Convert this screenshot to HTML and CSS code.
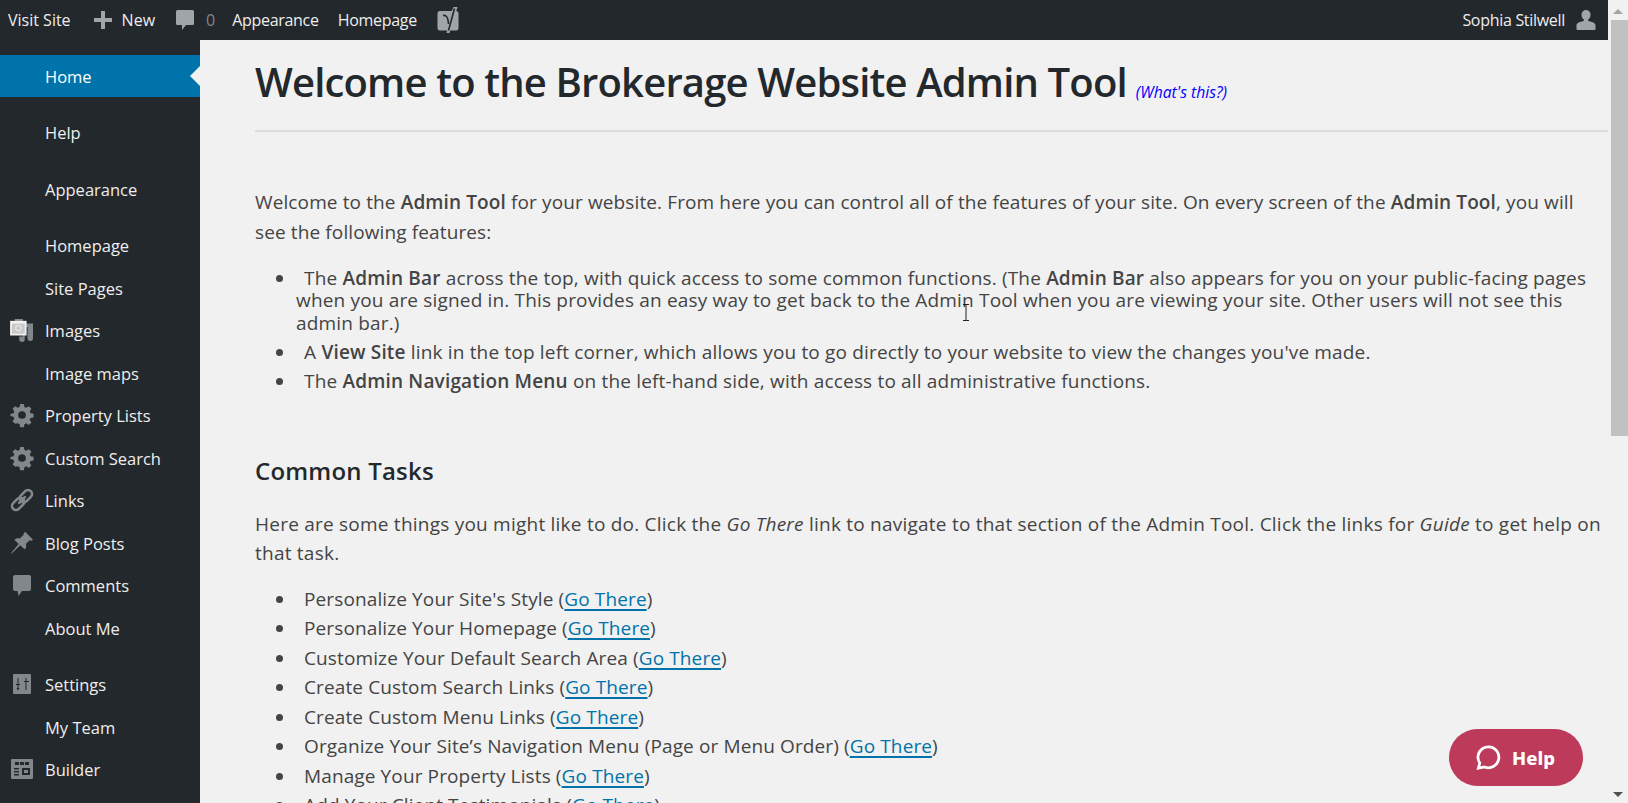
FILE: index.html
```html
<!DOCTYPE html>
<html lang="en">
<head>
<meta charset="utf-8">
<title>Admin Tool</title>
<link rel="stylesheet" href="styles.css">
</head>
<body>
<header class="topbar">
  <a class="tb-item tb-first">Visit Site</a>
  <a class="tb-item tb-new"><svg class="tb-ic plus" viewBox="0 0 20 20"><path d="M8 1h4v7h7v4h-7v7H8v-7H1V8h7z"/></svg>New</a>
  <a class="tb-item tb-comments"><svg class="tb-ic" viewBox="0 0 20 20"><path d="M2.500 0h15A1.500 1.500 0 0 1 19 1.500v12a1.500 1.500 0 0 1-1.500 1.500H11l-4 5v-5H2.500A1.500 1.500 0 0 1 1 13.500v-12A1.500 1.500 0 0 1 2.500 0z"/></svg><span class="dim">0</span></a>
  <a class="tb-item tight">Appearance</a>
  <a class="tb-item tb-home tight">Homepage</a>
  <a class="tb-item"><svg class="tb-yoast" viewBox="0 0 22 26"><path d="M3 4h16a2.500 2.500 0 0 1 2.500 2.500V21a2.500 2.500 0 0 1-2.500 2.500H3A2.500 2.500 0 0 1 .5 21V6.500A2.500 2.500 0 0 1 3 4z"/><path d="M15 3.500L16.500 0h4L12.500 26H9.500z"/><path class="y" d="M6 8.500c2.500-.5 4.500 1 5 4.500l.5 4M17.500 1.500l-6 22"/></svg></a>
  <span class="tb-spacer"></span>
  <a class="tb-item tb-user tight">Sophia Stilwell<svg class="tb-ic user" viewBox="0 0 20 20"><path d="M10 0a4.500 4.500 0 0 1 4.500 4.900c0 2-1 3.600-2.300 4.400v1.600c2.800.6 7.300 1.600 7.300 4.300V19a1 1 0 0 1-1 1H1.500a1 1 0 0 1-1-1v-3.800c0-2.700 4.500-3.700 7.300-4.300V9.300C6.500 8.500 5.500 6.900 5.500 4.900A4.500 4.500 0 0 1 10 0z"/></svg></a>
</header>
<div class="shell">
  <nav class="sidebar">
    <a class="nav-item current">Home</a>
    <a class="nav-item sep">Help</a>
    <a class="nav-item sep">Appearance</a>
    <a class="nav-item sep">Homepage</a>
    <a class="nav-item">Site Pages</a>
    <a class="nav-item"><span class="nav-ic"><svg viewBox="0 0 24 24"><path d="M4 0h9v3H4zM13 5h11v16a3 3 0 0 1-6 0V9h-3v13a3 3 0 0 1-6 0v-3h4z"/><path class="w" d="M-1 2h18v16H-1z"/><path class="c" d="M1 5h14v11H1z"/><circle class="o" cx="8" cy="10" r="3"/></svg></span>Images</a>
    <a class="nav-item">Image maps</a>
    <a class="nav-item"><span class="nav-ic"><svg viewBox="0 0 20 20"><path fill-rule="evenodd" d="M8.300 0h3.400l.5 2.800 1.700.7L16.200 2l2.400 2.400-1.600 2.300.7 1.700 2.800.5v3.400l-2.800.5-.7 1.700 1.600 2.300-2.400 2.400-2.300-1.600-1.700.7-.5 2.800H8.300l-.5-2.800-1.700-.7L3.800 18l-2.400-2.400 1.600-2.300-.7-1.700L-.5 11V9l2.800-.6.7-1.700L1.400 4.400 3.800 2l2.300 1.500 1.700-.7zM10 6.500a3.500 3.500 0 1 0 0 7 3.500 3.500 0 0 0 0-7z"/></svg></span>Property Lists</a>
    <a class="nav-item"><span class="nav-ic"><svg viewBox="0 0 20 20"><path fill-rule="evenodd" d="M8.300 0h3.400l.5 2.800 1.700.7L16.200 2l2.400 2.400-1.600 2.300.7 1.700 2.800.5v3.400l-2.800.5-.7 1.700 1.600 2.300-2.400 2.400-2.300-1.600-1.700.7-.5 2.800H8.300l-.5-2.800-1.700-.7L3.800 18l-2.400-2.400 1.600-2.300-.7-1.700L-.5 11V9l2.800-.6.7-1.700L1.400 4.400 3.800 2l2.300 1.500 1.700-.7zM10 6.500a3.500 3.500 0 1 0 0 7 3.500 3.500 0 0 0 0-7z"/></svg></span>Custom Search</a>
    <a class="nav-item"><span class="nav-ic"><svg viewBox="0 0 22 22"><g class="stroke" transform="rotate(-45 11 11)"><rect x="-1.500" y="7" width="14" height="8" rx="4"/><rect x="9.500" y="7" width="14" height="8" rx="4"/><path d="M7 11h8"/></g></svg></span>Links</a>
    <a class="nav-item"><span class="nav-ic"><svg viewBox="0 0 20 20"><path d="M13 0l7 7-1.500 1-1.500-.5-3.500 3.500c.8 2 .3 3.700-1 5L8.500 12 1 19l-1 1 .6-1.500L7 11 3 7c1.300-1.300 3-1.800 5-1l3.500-3.500L11.500 1z"/></svg></span>Blog Posts</a>
    <a class="nav-item"><span class="nav-ic"><svg viewBox="0 0 22 22"><path d="M4 1h14a2 2 0 0 1 2 2v12a2 2 0 0 1-2 2h-7l-3.500 5-1-5H4a2 2 0 0 1-2-2V3a2 2 0 0 1 2-2z"/></svg></span>Comments</a>
    <a class="nav-item">About Me</a>
    <a class="nav-item sep"><span class="nav-ic"><svg viewBox="0 0 22 22"><path fill-rule="evenodd" d="M3 1h16a1 1 0 0 1 1 1v18a1 1 0 0 1-1 1H3a1 1 0 0 1-1-1V2a1 1 0 0 1 1-1zM6.500 5v6H5v1h1.500v3h-1L7 17.500 8.500 15h-1v-3H9v-1H7.500V5zm8 0v3H13v1h1.500v8h1V9H18V8h-2.500V5z"/></svg></span>Settings</a>
    <a class="nav-item">My Team</a>
    <a class="nav-item"><span class="nav-ic"><svg viewBox="0 0 22 20"><path fill-rule="evenodd" d="M1 0h20a1 1 0 0 1 1 1v18a1 1 0 0 1-1 1H1a1 1 0 0 1-1-1V1a1 1 0 0 1 1-1zm3 3v3h4V3zm5 0v3h4V3zm5 0v3h4V3zM3 9v1.500h5V9zm0 3v1.500h5V12zm0 3v1.500h5V15zm8-6v7h8V9zm2 2h4v3h-4z"/></svg></span>Builder</a>
  </nav>
  <main class="content">
    <div class="headline">
      <h1>Welcome to the Brokerage Website Admin Tool</h1>
      <a class="whats">(What's this?)</a>
    </div>
    <p class="intro">Welcome to the <b>Admin Tool</b> for your website. From here you can control all of the features of your site. On every screen of the <b>Admin Tool</b>, you will<br>see the following features:</p>
    <ul class="features">
      <li>&nbsp;The <b>Admin Bar</b> across the top, with quick access to some common functions. (The <b>Admin Bar</b> also appears for you on your public-facing pages<br>when you are signed in. This provides an easy way to get back to the Admin Tool when you are viewing your site. Other users will not see this<br>admin bar.)</li>
      <li>&nbsp;A <b>View Site</b> link in the top left corner, which allows you to go directly to your website to view the changes you've made.</li>
      <li>&nbsp;The <b>Admin Navigation Menu</b> on the left-hand side, with access to all administrative functions.</li>
    </ul>
    <h2>Common Tasks</h2>
    <p class="tasks-intro">Here are some things you might like to do. Click the <i>Go There</i> link to navigate to that section of the Admin Tool. Click the links for <i>Guide</i> to get help on<br>that task.</p>
    <ul class="tasks">
      <li>Personalize Your Site's Style (<a>Go There</a>)</li>
      <li>Personalize Your Homepage (<a>Go There</a>)</li>
      <li>Customize Your Default Search Area (<a>Go There</a>)</li>
      <li>Create Custom Search Links (<a>Go There</a>)</li>
      <li>Create Custom Menu Links (<a>Go There</a>)</li>
      <li>Organize Your Site’s Navigation Menu (Page or Menu Order) (<a>Go There</a>)</li>
      <li>Manage Your Property Lists (<a>Go There</a>)</li>
      <li>Add Your Client Testimonials (<a>Go There</a>)</li>
    </ul>
  </main>
  <div class="scrollbar">
    <span class="arrow up"></span>
    <span class="thumb"></span>
    <span class="arrow down"></span>
  </div>
</div>
<button class="help"><svg viewBox="0 0 24 24"><path d="M12 2.500a9.300 9.300 0 1 1-3.600 17.900L3 21.500l1.200-4.600A9.300 9.300 0 0 1 12 2.500z"/></svg>Help</button>
<svg class="cursor" viewBox="0 0 8 17"><path d="M1 .5h6M4 .5v16M1 16.500h6"/></svg>
</body>
</html>
```
FILE: styles.css
```css
* { box-sizing: border-box; }
html, body { margin: 0; height: 100%; overflow: hidden; }
body { background: #f1f1f1; font-family: "Open Sans", "Noto Sans", sans-serif; color: #444; position: relative; }
.topbar { height: 40px; margin-right: 20px; background: #23282d; display: flex; align-items: center; color: #eee; font-size: 16px; padding: 0 8px; }
.tb-item { display: flex; align-items: center; margin-right: 19px; white-space: nowrap; }
.tight { letter-spacing: -.3px; }
.tb-first { margin-right: 22px; }
.tb-new { margin-right: 20px; }
.tb-comments { margin-right: 17px; }
.tb-home { margin-right: 20px; }
.tb-ic { width: 20px; height: 20px; fill: #a0a5aa; margin-right: 9px; }
.tb-comments .tb-ic { margin-right: 11px; }
.dim { color: #82878c; }
.tb-yoast { width: 22px; height: 26px; overflow: visible; }
.tb-yoast path { fill: #a0a5aa; }
.tb-yoast .y { fill: none; stroke: #23282d; stroke-width: 1.600; }
.tb-spacer { flex: 1; }
.tb-user { margin-right: 0; padding-right: 4px; }
.tb-user .user { margin: 0 0 0 11px; }
.shell { display: flex; height: calc(100% - 40px); }
.sidebar { width: 200px; flex: none; background: #23282d; padding-top: 15px; display: flex; flex-direction: column; }
.nav-item { height: 42.500px; flex: none; display: flex; align-items: center; padding: .5px 0 0 45px; color: #eee; font-size: 16.500px; position: relative; }
.sep { margin-top: 14px; }
.nav-item.current { background: #0073aa; color: #fff; height: 42px; }
.nav-item.current::after { content: ""; position: absolute; right: 0; top: 50%; margin-top: -10px; border: 10px solid transparent; border-right-color: #f1f1f1; border-left-width: 0; }
.nav-ic { position: absolute; left: 11px; top: 50%; transform: translateY(-50%); width: 22px; height: 22px; display: flex; align-items: center; justify-content: center; }
.nav-ic svg { width: 22px; height: 22px; fill: #82878c; overflow: visible; }
.stroke { fill: none; stroke: #82878c; stroke-width: 2.600; stroke-linecap: round; }
.nav-ic .w { fill: #f1f1f1; }
.nav-ic .c { fill: #c9c9c9; }
.nav-ic .o { fill: none; stroke: #f5f5f5; stroke-width: 1; }
.content { flex: 1; min-width: 0; padding: 0 0 0 55px; overflow: hidden; font-size: 19px; line-height: 29.500px; }
.content b { font-weight: 600; }
.headline { display: flex; align-items: baseline; gap: 9px; padding: 13px 0 9px; height: 92px; border-bottom: 2px solid #ddd; white-space: nowrap; }
h1 { margin: 0; font-size: 40px; line-height: 58px; font-weight: 600; color: #23282d; letter-spacing: -.84px; }
.whats { color: #00f; font-size: 15.700px; font-style: italic; font-weight: 500; position: relative; top: 1px; }
.intro { margin: 56px 0 0; letter-spacing: .12px; }
ul { margin: 0; padding-left: 41px; }
.features { margin-top: 17px; letter-spacing: .17px; }
.features li { text-indent: 3px; }
.features li:first-child { line-height: 22.300px; margin-bottom: 4px; padding-top: 3px; }
h2 { margin: 58px 0 0; font-size: 24px; line-height: 32px; font-weight: 600; color: #23282d; letter-spacing: .2px; }
.tasks-intro { margin: 23px 0 0; letter-spacing: .23px; }
.tasks { margin-top: 16px; letter-spacing: .12px; }
.tasks a { color: #0073aa; text-decoration: underline; text-decoration-thickness: 2px; text-underline-offset: 3px; }
.tasks li { padding-left: 8px; }
.scrollbar { width: 20px; flex: none; background: #f1f1f1; display: flex; flex-direction: column; align-items: center; position: relative; margin-top: -40px; padding-top: 9px; }
.thumb { width: 17px; height: 416px; background: #c1c1c1; margin-top: 6px; margin-left: 2px; }
.arrow { width: 0; height: 0; border: 5px solid transparent; border-top: 0; border-bottom: 5px solid #a3a3a3; }
.arrow.down { position: absolute; bottom: 6px; border-bottom: 0; border-top: 5px solid #505050; }
.help { position: absolute; left: 1449px; top: 729px; width: 134px; height: 57px; border: 0; border-radius: 29px; background: #bd3a5a; color: #fff; font: 800 18.500px "Noto Sans", sans-serif; display: flex; align-items: center; justify-content: center; gap: 10px; padding: 0 2px 0 0; }
.help svg { width: 27px; height: 27px; fill: none; stroke: #fff; stroke-width: 2.500; }
.cursor { position: absolute; left: 962px; top: 304px; width: 8px; height: 17px; fill: none; stroke: #222; stroke-width: 1; }
```
